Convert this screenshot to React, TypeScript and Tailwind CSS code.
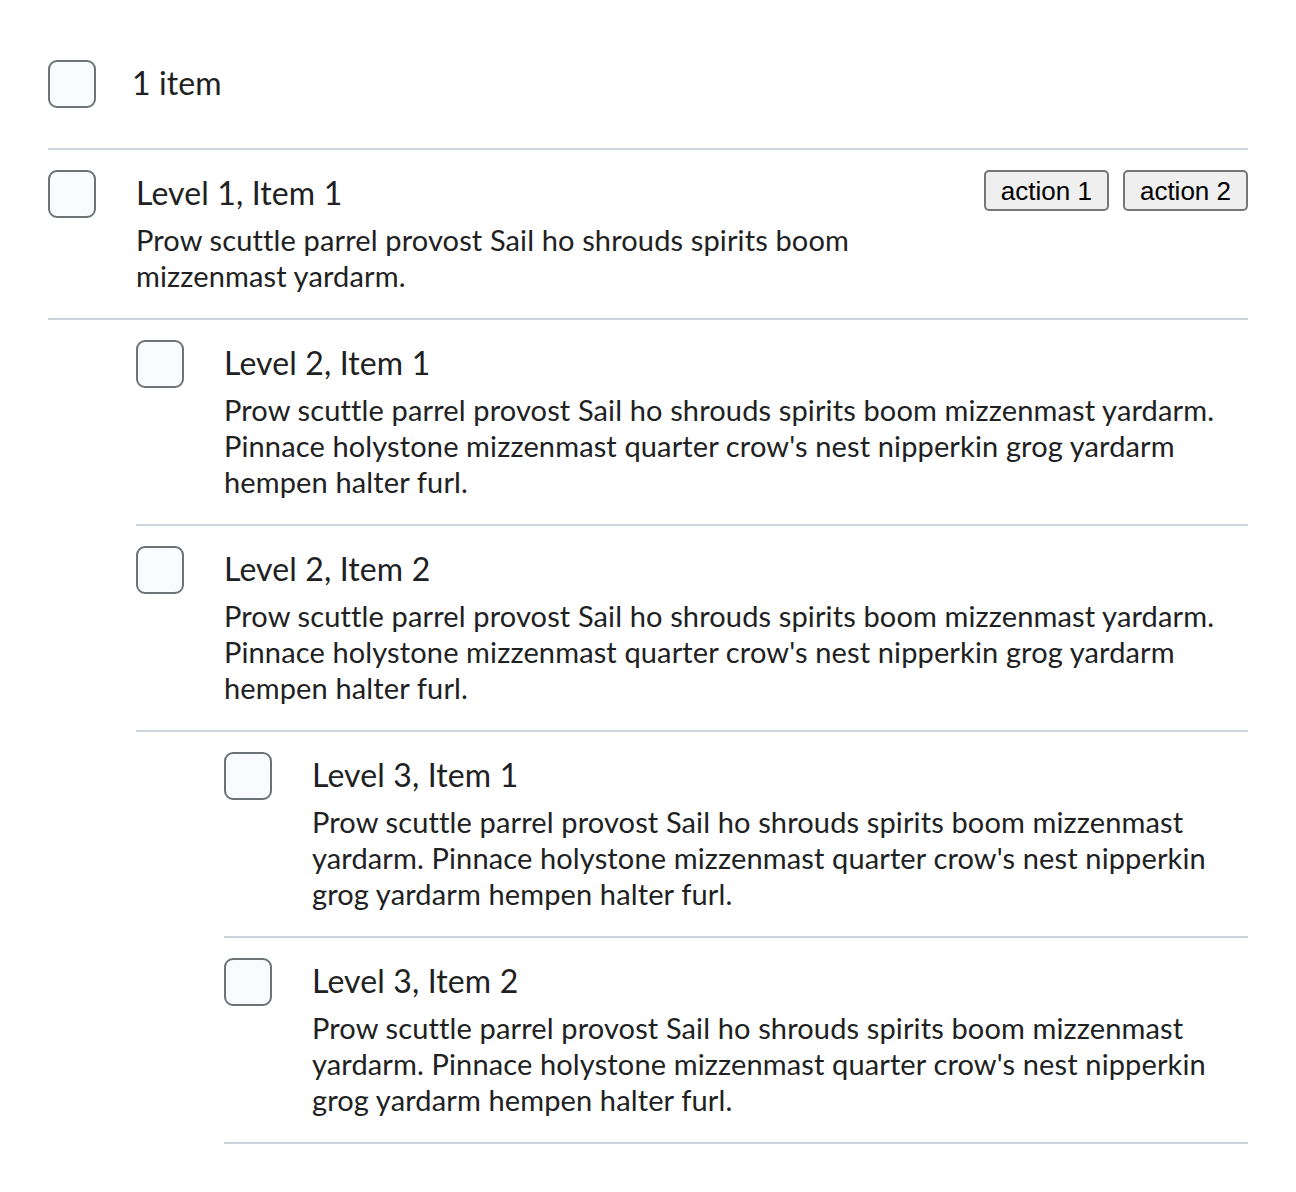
import React from 'react';

const desc =
  "Prow scuttle parrel provost Sail ho shrouds spirits boom mizzenmast yardarm. Pinnace holystone mizzenmast quarter crow's nest nipperkin grog yardarm hempen halter furl.";

type Item = {
  title: string;
  text: string;
  actions?: string[];
  children?: Item[];
};

const items: Item[] = [
  {
    title: 'Level 1, Item 1',
    text: 'Prow scuttle parrel provost Sail ho shrouds spirits boom mizzenmast yardarm.',
    actions: ['action 1', 'action 2'],
    children: [
      { title: 'Level 2, Item 1', text: desc },
      {
        title: 'Level 2, Item 2',
        text: desc,
        children: [
          { title: 'Level 3, Item 1', text: desc },
          { title: 'Level 3, Item 2', text: desc },
        ],
      },
    ],
  },
];

const Checkbox: React.FC = () => (
  <div className="w-12 h-12 shrink-0 rounded-[9px] border-2 border-[#6e7377] bg-[#f9fbff]" />
);

const ListItem: React.FC<{ item: Item }> = ({ item }) => (
  <li>
    <div className="flex gap-10 pt-5 pb-6 border-b-2 border-[#cdd5dc]">
      <Checkbox />
      <div className="flex-1 min-w-0 tracking-[0.13px]">
        <div className="text-[32px] leading-[46px] text-[#202122]">{item.title}</div>
        <p className="mt-[6px] text-[29px] leading-[36px] text-[#202122]">{item.text}</p>
      </div>
      {item.actions && (
        <div className="flex gap-[14px] shrink-0 items-start">
          {item.actions.map((a) => (
            <button
              key={a}
              className="h-[41px] px-[15px] rounded-[5px] border-2 border-[#767676] bg-[#efefef] text-[26px] leading-none text-black"
              style={{ fontFamily: '"Liberation Sans", Arial, sans-serif' }}
            >
              {a}
            </button>
          ))}
        </div>
      )}
    </div>
    {item.children && (
      <ul className="ml-[88px]">
        {item.children.map((c) => (
          <ListItem key={c.title} item={c} />
        ))}
      </ul>
    )}
  </li>
);

export default function App() {
  return (
    <div
      className="min-h-screen bg-white p-12"
      style={{ fontFamily: 'Lato, "Noto Sans", sans-serif' }}
    >
      <div className="flex items-center gap-[36px] pt-3 pb-10 border-b-2 border-[#cdd5dc]">
        <Checkbox />
        <span className="text-[32px] leading-[46px] pb-[2px] tracking-[0.13px] text-[#202122]">1 item</span>
      </div>
      <ul>
        {items.map((i) => (
          <ListItem key={i.title} item={i} />
        ))}
      </ul>
    </div>
  );
}
